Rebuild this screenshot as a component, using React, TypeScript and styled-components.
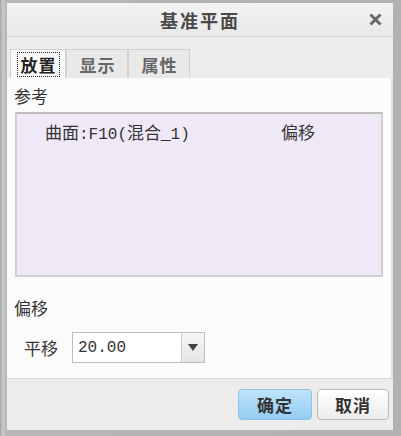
import React from 'react';
import styled, { createGlobalStyle } from 'styled-components';

const Global = createGlobalStyle`
  html, body { margin: 0; padding: 0; background: #ffffff; }
  body { font-family: "Noto Sans CJK SC", "DejaVu Sans", sans-serif; }
`;

const Frame = styled.div`
  width: 401px;
  height: 436px;
  box-sizing: border-box;
  padding: 3px 8px 6px 7px;
  background: linear-gradient(to right, #a4a6a6 0px, #cacccc 3px, #b6b8b8 6px, #b0b2b2 100%);
  display: flex;
  flex-direction: column;
`;

const TitleBar = styled.div`
  height: 33px;
  flex: none;
  display: flex;
  align-items: center;
  justify-content: center;
  position: relative;
  background: linear-gradient(#f3f3f3, #e8e8e8);
  border-bottom: 1px solid #d4d4d4;
  font-size: 18px;
  font-weight: bold;
  color: #4a4a4a;
  letter-spacing: 2px;
`;

const Close = styled.svg`
  position: absolute;
  right: 11px;
  top: 10px;
`;

const TabStrip = styled.div`
  height: 41px;
  flex: none;
  background: #ececec;
  display: flex;
  align-items: flex-end;
  padding-left: 3px;
`;

const Tab = styled.div<{ $active?: boolean; $w: number }>`
  width: ${p => p.$w}px;
  height: 29px;
  box-sizing: border-box;
  display: flex;
  align-items: center;
  justify-content: center;
  background: ${p => (p.$active ? '#fbfbfb' : '#e9e9e9')};
  border: 1px solid #d2d2d2;
  border-bottom: none;
  font-size: 17px;
  font-weight: bold;
  color: ${p => (p.$active ? '#222' : '#666')};
`;

const TabLabel = styled.span<{ $focus?: boolean }>`
  padding: 0 2px 0 3px;
  line-height: 23px;
  outline: ${p => (p.$focus ? '1px dotted #222' : 'none')};
  letter-spacing: 1px;
`;

const Panel = styled.div`
  flex: 1;
  background: #fbfbfb;
  padding: 8px 8px 0 7px;
  display: flex;
  flex-direction: column;
  border-right: 2px solid #e2e2e2;
`;

const Label = styled.div`
  font-size: 17px;
  color: #333;
  line-height: 20px;
`;

const ListBox = styled.div`
  margin-top: 6px;
  margin-left: 1px;
  height: 165px;
  box-sizing: border-box;
  background: #efe9f7;
  border: 2px solid #cfcfcf;
  border-top-color: #bdbdbd;
  padding: 6px 0 0 28px;
  display: flex;
  font-size: 17px;
  color: #333;
`;

const Cell = styled.span<{ $w?: number }>`
  width: ${p => (p.$w ? p.$w + 'px' : 'auto')};
  line-height: 24px;
`;

const Mono = styled.span`
  font-family: "Liberation Mono", "DejaVu Sans Mono", monospace;
  font-size: 16px;
`;

const OffsetLabel = styled(Label)`
  margin-top: 21px;
`;

const Row = styled.div`
  display: flex;
  align-items: center;
  margin-top: 14px;
  padding-left: 10px;
  gap: 14px;
`;

const Combo = styled.div`
  width: 133px;
  height: 31px;
  box-sizing: border-box;
  border: 1px solid #bdbdbd;
  background: #fff;
  display: flex;
`;

const ComboValue = styled.div`
  flex: 1;
  padding-left: 5px;
  display: flex;
  align-items: center;
  font-family: "Liberation Mono", "DejaVu Sans Mono", monospace;
  font-size: 16px;
  color: #333;
`;

const ComboArrow = styled.div`
  width: 22px;
  border-left: 1px solid #d0d0d0;
  background: linear-gradient(#f6f6f6, #e4e4e4);
  display: flex;
  align-items: center;
  justify-content: center;
`;

const Footer = styled.div`
  height: 52px;
  flex: none;
  box-sizing: border-box;
  background: #ececec;
  border-top: 1px solid #d8d8d8;
  display: flex;
  justify-content: flex-end;
  align-items: center;
  padding-right: 4px;
  gap: 5px;
`;

const Button = styled.button<{ $primary?: boolean }>`
  width: ${p => (p.$primary ? '74px' : '72px')};
  height: 31px;
  border-radius: 4px;
  border: 1px solid ${p => (p.$primary ? '#8ec3e6' : '#b8b8b8')};
  background: ${p =>
    p.$primary
      ? 'linear-gradient(#bfe3fb, #93cdf3)'
      : 'linear-gradient(#ffffff, #ececec)'};
  font-family: "Noto Sans CJK SC", sans-serif;
  font-size: 17px;
  font-weight: bold;
  color: #333;
  letter-spacing: 1px;
  padding: 0;
`;

export default function App() {
  return (
    <>
      <Global />
      <Frame>
        <TitleBar>
          基准平面
          <Close width="13" height="13" viewBox="0 0 13 13">
            <path d="M1.5 1.5 L11.5 11.5 M11.5 1.5 L1.5 11.5" stroke="#6a6a6a" strokeWidth="3" />
          </Close>
        </TitleBar>
        <TabStrip>
          <Tab $active $w={56}>
            <TabLabel $focus>放置</TabLabel>
          </Tab>
          <Tab $w={62}>
            <TabLabel>显示</TabLabel>
          </Tab>
          <Tab $w={62}>
            <TabLabel>属性</TabLabel>
          </Tab>
        </TabStrip>
        <Panel>
          <Label>参考</Label>
          <ListBox>
            <Cell $w={236}>
              曲面<Mono>:F10(</Mono>混合<Mono>_1)</Mono>
            </Cell>
            <Cell>偏移</Cell>
          </ListBox>
          <OffsetLabel>偏移</OffsetLabel>
          <Row>
            <Label>平移</Label>
            <Combo>
              <ComboValue>20.00</ComboValue>
              <ComboArrow>
                <svg width="10" height="7" viewBox="0 0 10 7">
                  <path d="M0 0 H10 L5 7 Z" fill="#444" />
                </svg>
              </ComboArrow>
            </Combo>
          </Row>
        </Panel>
        <Footer>
          <Button $primary>确定</Button>
          <Button>取消</Button>
        </Footer>
      </Frame>
    </>
  );
}
